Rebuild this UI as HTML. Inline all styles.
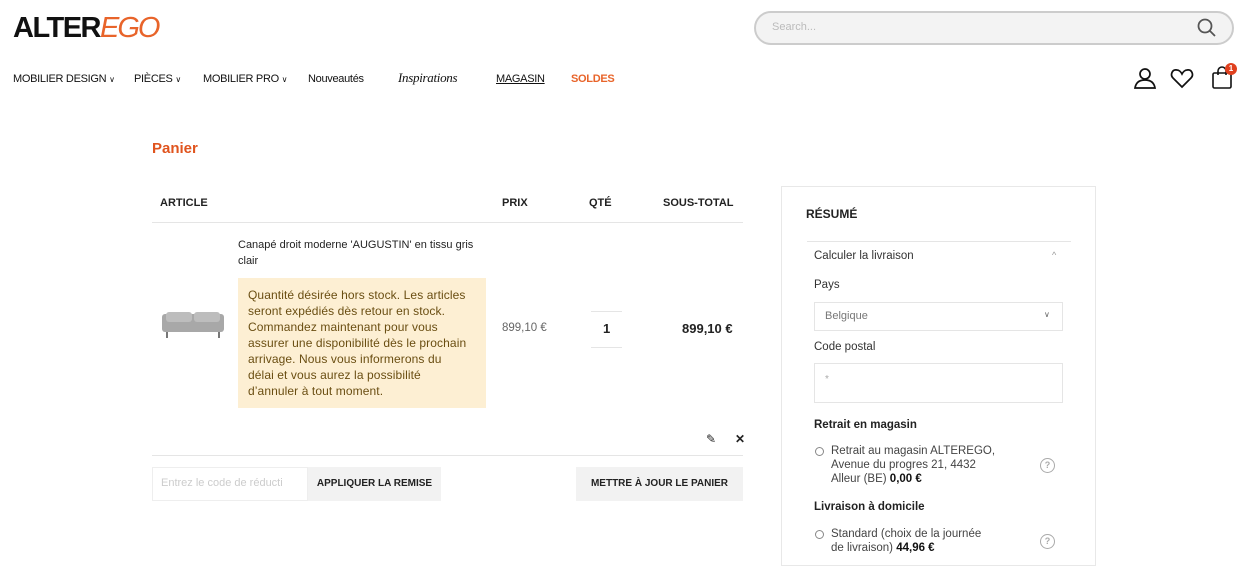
<!DOCTYPE html>
<html><head><meta charset="utf-8"><style>
*{margin:0;padding:0;box-sizing:border-box}
body{width:1249px;height:561px;overflow:hidden;background:#fff;font-family:"Liberation Sans",sans-serif;color:#222;position:relative}
.a{position:absolute;white-space:nowrap}
.nav{font-size:11px;color:#111;top:72px;letter-spacing:-0.3px;line-height:14px}
.hd{font-size:11px;font-weight:bold;top:197px;color:#222}
.sm{font-size:12px}
</style></head><body>
<div class="a" style="left:13px;top:12px;font-size:29px;font-weight:bold;letter-spacing:-1.5px;color:#111">ALTER<span style="color:#e8642a;font-style:italic;font-weight:normal;letter-spacing:-2px">EGO</span></div>
<div class="a" style="left:754px;top:11px;width:480px;height:34px;border:2px solid #ccc;border-radius:18px;background:#f3f3f3"></div>
<div class="a" style="left:772px;top:21px;font-size:11px;color:#bbb">Search...</div>
<svg class="a" style="left:1196px;top:17px" width="22" height="22" viewBox="0 0 22 22"><circle cx="9" cy="9" r="6.5" fill="none" stroke="#555" stroke-width="1.8"/><path d="M14 14l5 5" stroke="#555" stroke-width="1.8"/></svg>
<div class="a nav" style="left:13px">MOBILIER DESIGN <span style="font-size:8px">∨</span></div>
<div class="a nav" style="left:134px">PIÈCES <span style="font-size:8px">∨</span></div>
<div class="a nav" style="left:203px">MOBILIER PRO <span style="font-size:8px">∨</span></div>
<div class="a nav" style="left:308px">Nouveautés</div>
<div class="a nav" style="left:398px;font-style:italic;font-family:'Liberation Serif',serif;font-size:13px;top:71px">Inspirations</div>
<div class="a nav" style="left:496px;text-decoration:underline">MAGASIN</div>
<div class="a nav" style="left:571px;color:#e8642a;font-weight:bold">SOLDES</div>
<svg class="a" style="left:1133px;top:66px" width="24" height="24" viewBox="0 0 24 24" fill="none" stroke="#111" stroke-width="1.7"><circle cx="12" cy="8" r="5"/><path d="M2 22c1-6 5-8 10-8s9 2 10 8z"/></svg>
<svg class="a" style="left:1170px;top:67px" width="24" height="22" viewBox="0 0 24 22" fill="none" stroke="#111" stroke-width="1.7"><path d="M12 20L3 11C0 8 2 2 7 3c2 0 4 2 5 4 1-2 3-4 5-4 5-1 7 5 4 8z"/></svg>
<svg class="a" style="left:1211px;top:66px" width="24" height="24" viewBox="0 0 24 24" fill="none" stroke="#111" stroke-width="1.6"><rect x="2" y="7" width="18" height="15" rx="1.5"/><path d="M7 9V5a4 4 0 0 1 8 0v4"/></svg>
<div class="a" style="left:1225px;top:63px;width:12px;height:12px;border-radius:6px;background:#e0401e;color:#fff;font-size:8px;font-weight:bold;text-align:center;line-height:12px">1</div>

<div class="a" style="left:152px;top:140px;font-size:15px;font-weight:bold;color:#e0541e">Panier</div>
<div class="a hd" style="left:160px">ARTICLE</div>
<div class="a hd" style="left:502px">PRIX</div>
<div class="a hd" style="left:589px">QTÉ</div>
<div class="a hd" style="left:663px">SOUS-TOTAL</div>
<div class="a" style="left:152px;top:222px;width:591px;border-top:1px solid #e5e5e5"></div>
<div class="a sm" style="left:238px;top:237px;font-size:11px;line-height:16px;white-space:normal;width:250px">Canapé droit moderne 'AUGUSTIN' en tissu gris<br>clair</div>
<svg class="a" style="left:160px;top:310px" width="66" height="30" viewBox="0 0 66 30"><rect x="2" y="4" width="62" height="18" rx="3" fill="#a8a8a8"/><rect x="6" y="2" width="26" height="10" rx="3" fill="#bdbdbd"/><rect x="34" y="2" width="26" height="10" rx="3" fill="#bdbdbd"/><rect x="6" y="22" width="2" height="6" fill="#777"/><rect x="58" y="22" width="2" height="6" fill="#777"/></svg>
<div class="a" style="left:238px;top:278px;width:248px;height:130px;background:#fdefd3"></div>
<div class="a" style="left:248px;top:287px;font-size:12px;line-height:16px;color:#6a4e12;letter-spacing:0.1px">Quantité désirée hors stock. Les articles<br>seront expédiés dès retour en stock.<br>Commandez maintenant pour vous<br>assurer une disponibilité dès le prochain<br>arrivage. Nous vous informerons du<br>délai et vous aurez la possibilité<br>d’annuler à tout moment.</div>
<div class="a" style="left:502px;top:322px;font-size:11.5px;color:#666">899,10 €</div>
<div class="a" style="left:591px;top:311px;width:31px;height:37px;border-top:1px solid #e5e5e5;border-bottom:1px solid #e5e5e5"></div>
<div class="a" style="left:603px;top:321px;font-size:13px;font-weight:bold">1</div>
<div class="a" style="left:682px;top:321px;font-size:13px;font-weight:bold">899,10 €</div>
<div class="a" style="left:706px;top:432px;font-size:12px">✎</div>
<div class="a" style="left:735px;top:432px;font-size:12px;font-weight:bold">✕</div>
<div class="a" style="left:152px;top:455px;width:591px;border-top:1px solid #e5e5e5"></div>
<div class="a" style="left:152px;top:467px;width:156px;height:34px;border:1px solid #eee"></div>
<div class="a" style="left:161px;top:477px;font-size:11px;color:#ccc">Entrez le code de réducti</div>
<div class="a" style="left:308px;top:467px;width:133px;height:34px;background:#f2f2f2;font-size:10px;font-weight:bold;text-align:center;line-height:34px">APPLIQUER LA REMISE</div>
<div class="a" style="left:576px;top:467px;width:167px;height:34px;background:#f2f2f2;font-size:10px;font-weight:bold;text-align:center;line-height:34px">METTRE À JOUR LE PANIER</div>

<div class="a" style="left:781px;top:186px;width:315px;height:380px;border:1px solid #e8e8e8"></div>
<div class="a" style="left:806px;top:207px;font-size:12px;font-weight:bold">RÉSUMÉ</div>
<div class="a" style="left:807px;top:241px;width:264px;border-top:1px solid #e5e5e5"></div>
<div class="a" style="left:814px;top:250px;font-size:11.5px;color:#333">Calculer la livraison</div>
<div class="a" style="left:1052px;top:250px;font-size:9px;color:#999">^</div>
<div class="a" style="left:814px;top:279px;font-size:11.5px;color:#333">Pays</div>
<div class="a" style="left:814px;top:302px;width:249px;height:29px;border:1px solid #e5e5e5"></div>
<div class="a" style="left:825px;top:310px;font-size:11px;color:#777">Belgique</div>
<div class="a" style="left:1044px;top:310px;font-size:8px;color:#666">∨</div>
<div class="a" style="left:814px;top:341px;font-size:11.5px;color:#333">Code postal</div>
<div class="a" style="left:814px;top:363px;width:249px;height:40px;border:1px solid #e5e5e5"></div>
<div class="a" style="left:825px;top:374px;font-size:10px;color:#aaa">*</div>
<div class="a" style="left:814px;top:419px;font-size:11.5px;font-weight:bold">Retrait en magasin</div>
<div class="a" style="left:815px;top:447px;width:9px;height:9px;border:1px solid #888;border-radius:50%"></div>
<div class="a" style="left:831px;top:444px;font-size:11.5px;line-height:14px;color:#444">Retrait au magasin ALTEREGO,<br>Avenue du progres 21, 4432<br>Alleur (BE) <b style="color:#111">0,00 €</b></div>
<div class="a" style="left:1040px;top:458px;width:15px;height:15px;border:1.5px solid #aaa;border-radius:50%;font-size:9px;color:#aaa;text-align:center;line-height:12px;font-weight:bold">?</div>
<div class="a" style="left:814px;top:501px;font-size:11.5px;font-weight:bold">Livraison à domicile</div>
<div class="a" style="left:815px;top:530px;width:9px;height:9px;border:1px solid #888;border-radius:50%"></div>
<div class="a" style="left:831px;top:527px;font-size:11.5px;line-height:14px;color:#444">Standard (choix de la journée<br>de livraison) <b style="color:#111">44,96 €</b></div>
<div class="a" style="left:1040px;top:534px;width:15px;height:15px;border:1.5px solid #aaa;border-radius:50%;font-size:9px;color:#aaa;text-align:center;line-height:12px;font-weight:bold">?</div>
</body></html>
